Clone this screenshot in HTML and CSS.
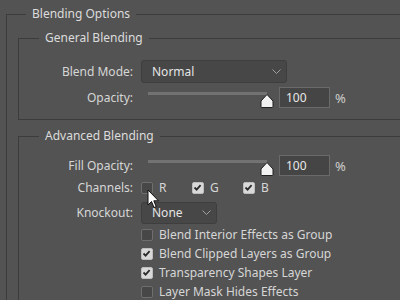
FILE: index.html
```html
<!DOCTYPE html>
<html lang="en">
<head>
    <meta charset="UTF-8">
    <title>Blending Options</title>
    <link rel="stylesheet" href="styles.css">
</head>
<body>
    <fieldset class="grupo exterior">
        <legend>Blending Options</legend>

        <fieldset class="grupo seccion general">
            <legend>General Blending</legend>
            <div class="fila fila-modo">
                <span class="etiqueta">Blend Mode:</span>
                <div class="selector ancho">Normal
                    <svg class="flecha" width="9" height="6" viewBox="0 0 9 6"><path d="M0.5 0.5 L4.5 4.5 L8.5 0.5" fill="none" stroke="#a0a0a0" stroke-width="1"/></svg>
                </div>
            </div>
            <div class="fila fila-opacidad">
                <span class="etiqueta">Opacity:</span>
                <div class="control">
                    <div class="deslizador">
                        <span class="pista"></span>
                        <svg class="mando" width="14" height="14" viewBox="0 0 14 14"><path d="M7 0.5 L13 7 L13 12.5 Q13 13.5 12 13.5 L2 13.5 Q1 13.5 1 12.5 L1 7 Z" fill="#f2f2f2" stroke="#202020" stroke-width="1"/></svg>
                    </div>
                    <div class="numero">100</div>
                    <span class="unidad">%</span>
                </div>
            </div>
        </fieldset>

        <fieldset class="grupo seccion avanzado">
            <legend>Advanced Blending</legend>
            <div class="fila fila-relleno">
                <span class="etiqueta">Fill Opacity:</span>
                <div class="control">
                    <div class="deslizador">
                        <span class="pista"></span>
                        <svg class="mando" width="14" height="14" viewBox="0 0 14 14"><path d="M7 0.5 L13 7 L13 12.5 Q13 13.5 12 13.5 L2 13.5 Q1 13.5 1 12.5 L1 7 Z" fill="#f2f2f2" stroke="#202020" stroke-width="1"/></svg>
                    </div>
                    <div class="numero">100</div>
                    <span class="unidad">%</span>
                </div>
            </div>
            <div class="fila fila-canales">
                <span class="etiqueta">Channels:</span>
                <div class="canales">
                    <span class="canal"><span class="casilla"></span>R</span>
                    <span class="canal"><span class="casilla marcada"><svg width="11" height="11" viewBox="0 0 11 11"><path d="M2.5 5.5 L4.6 7.6 L8.6 3.2" fill="none" stroke="#2b2b2b" stroke-width="1.8"/></svg></span>G</span>
                    <span class="canal"><span class="casilla marcada"><svg width="11" height="11" viewBox="0 0 11 11"><path d="M2.5 5.5 L4.6 7.6 L8.6 3.2" fill="none" stroke="#2b2b2b" stroke-width="1.8"/></svg></span>B</span>
                </div>
            </div>
            <div class="fila fila-knockout">
                <span class="etiqueta">Knockout:</span>
                <div class="selector corto">None
                    <svg class="flecha" width="9" height="6" viewBox="0 0 9 6"><path d="M0.5 0.5 L4.5 4.5 L8.5 0.5" fill="none" stroke="#a0a0a0" stroke-width="1"/></svg>
                </div>
            </div>
            <div class="opciones">
                <div class="opcion"><span class="casilla"></span>Blend Interior Effects as Group</div>
                <div class="opcion"><span class="casilla marcada"><svg width="11" height="11" viewBox="0 0 11 11"><path d="M2.5 5.5 L4.6 7.6 L8.6 3.2" fill="none" stroke="#2b2b2b" stroke-width="1.8"/></svg></span>Blend Clipped Layers as Group</div>
                <div class="opcion"><span class="casilla marcada"><svg width="11" height="11" viewBox="0 0 11 11"><path d="M2.5 5.5 L4.6 7.6 L8.6 3.2" fill="none" stroke="#2b2b2b" stroke-width="1.8"/></svg></span>Transparency Shapes Layer</div>
                <div class="opcion"><span class="casilla"></span>Layer Mask Hides Effects</div>
            </div>
        </fieldset>
    </fieldset>

    <svg class="cursor" width="13" height="20" viewBox="0 0 13 20"><path d="M1 1 L1 16 L4.5 12.5 L7 18.5 L9.2 17.6 L6.8 11.8 L11.5 11.8 Z" fill="#ffffff" stroke="#111111" stroke-width="1" stroke-linejoin="round"/></svg>
</body>
</html>
```

FILE: styles.css
```css
html, body {
    margin: 0;
    width: 400px;
    height: 300px;
    overflow: hidden;
}
body {
    background-color: #535353;
    font-family: "Noto Sans", "Open Sans", sans-serif;
    font-size: 12px;
    line-height: 16px;
    color: #d6d6d6;
    position: relative;
}
.grupo {
    margin: 0;
    padding: 0;
    border: 1px solid #3c3c3c;
    border-right: none;
    border-bottom: none;
    min-width: 0;
}
.grupo > legend {
    padding: 0 6px;
    line-height: 16px;
    color: #dcdcdc;
}
.exterior {
    box-sizing: border-box;
    margin: 6px 0 0 6px;
    padding-left: 11px;
    width: 394px;
    height: 294px;
    overflow: hidden;
}
.exterior > legend {
    margin-left: 8px;
}
.seccion > legend {
    margin-left: 20px;
}
.general {
    margin-top: 8px;
    padding-top: 14px;
    padding-bottom: 11px;
    border-bottom: 1px solid #3c3c3c;
}
.avanzado {
    margin-top: 8px;
    padding-top: 11px;
}
.fila {
    display: grid;
    grid-template-columns: 114px 1fr;
    column-gap: 8px;
    align-items: center;
}
.etiqueta {
    text-align: right;
}
.fila-modo {
    height: 23px;
}
.fila-opacidad {
    height: 21px;
    margin-top: 4px;
}
.fila-relleno {
    height: 21px;
}
.fila-canales {
    height: 16px;
    margin-top: 4px;
}
.fila-knockout {
    height: 22px;
    margin-top: 6px;
}
.selector {
    box-sizing: border-box;
    height: 23px;
    padding: 0 0 0 10px;
    display: flex;
    align-items: center;
    justify-content: space-between;
    background-color: #474747;
    border: 1px solid #3e3e3e;
    border-radius: 3px;
    color: #e4e4e4;
}
.selector .flecha {
    margin-right: 5px;
}
.ancho {
    width: 146px;
}
.corto {
    width: 76px;
    height: 22px;
}
.control {
    display: flex;
    align-items: center;
}
.deslizador {
    position: relative;
    width: 138px;
    height: 21px;
}
.pista {
    display: block;
    margin: 5px 0 0 7px;
    width: 119px;
    height: 3px;
    background-color: #727272;
}
.mando {
    position: absolute;
    left: 119px;
    top: 7px;
}
.numero {
    box-sizing: border-box;
    width: 51px;
    height: 21px;
    padding-left: 6px;
    background-color: #454545;
    border: 1px solid #6a6a6a;
    color: #e8e8e8;
    line-height: 19px;
}
.unidad {
    margin-left: 5px;
    font-size: 13px;
    color: #cfcfcf;
}
.canales {
    display: flex;
}
.canal {
    width: 51px;
    display: flex;
    align-items: center;
}
.casilla {
    box-sizing: border-box;
    width: 12px;
    height: 12px;
    margin-right: 6px;
    border: 1px solid #6e6e6e;
    border-radius: 2px;
    background-color: #474747;
    flex: none;
}
.casilla.marcada {
    background-color: #d9d9d9;
    border-color: #bdbdbd;
}
.casilla svg {
    display: block;
    margin: -1px 0 0 -1px;
}
.opciones {
    margin: 1px 0 0 122px;
}
.opcion {
    height: 19px;
    display: flex;
    align-items: center;
}
.cursor {
    position: absolute;
    left: 147px;
    top: 189px;
}
```
